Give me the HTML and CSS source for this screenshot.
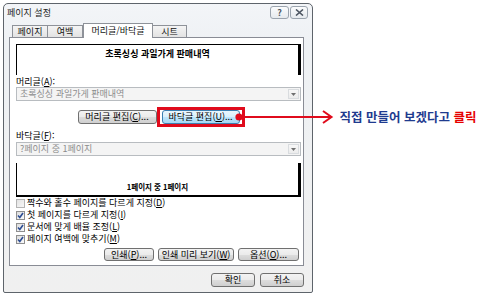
FILE: index.html
```html
<!DOCTYPE html>
<html lang="ko">
<head>
<meta charset="utf-8">
<title>페이지 설정</title>
<link rel="stylesheet" href="styles.css">
</head>
<body>
<div class="dialog">
  <div class="titlebar">
    <span class="title">페이지 설정</span>
    <div class="caption-btns">
      <span class="cbtn help">?</span>
      <span class="cbtn close"><svg width="9" height="7" viewBox="0 0 9 7"><path d="M1 0.5 L8 6.5 M8 0.5 L1 6.5" stroke="#4d5662" stroke-width="1.6" fill="none"/></svg></span>
    </div>
  </div>
  <div class="tabs">
    <span class="tab t1">페이지</span>
    <span class="tab t2">여백</span>
    <span class="tab t3 selected">머리글/바닥글</span>
    <span class="tab t4">시트</span>
  </div>
  <div class="panel">
    <div class="preview head-preview">초록싱싱 과일가게 판매내역</div>
    <div class="lbl">머리글(<u>A</u>):</div>
    <div class="combo"><span class="combo-text">초록싱싱 과일가게 판매내역</span><span class="drop"><svg width="5" height="3" viewBox="0 0 5 3"><path d="M0 0 L5 0 L2.5 3 Z" fill="#6f6f6f"/></svg></span></div>
    <div class="btnrow center">
      <span class="btn w79">머리글 편집(<u>C</u>)...</span>
      <span class="hl">
        <span class="btn hot w78">바닥글 편집(<u>U</u>)...</span>
        <span class="callout">
          <svg class="connector" width="100" height="16" viewBox="0 0 100 16">
            <line x1="4" y1="8" x2="96" y2="8" stroke="#e00b1c" stroke-width="2"/>
            <circle cx="4" cy="8" r="3.6" fill="#e00b1c"/>
            <polyline points="88,2 96.5,8 88,14" fill="none" stroke="#e00b1c" stroke-width="2"/>
          </svg>
          <span class="note">직접 만들어 보겠다고 <span class="red">클릭</span></span>
        </span>
      </span>
    </div>
    <div class="lbl lbl2">바닥글(<u>F</u>):</div>
    <div class="combo"><span class="combo-text">?페이지 중 1페이지</span><span class="drop"><svg width="5" height="3" viewBox="0 0 5 3"><path d="M0 0 L5 0 L2.5 3 Z" fill="#6f6f6f"/></svg></span></div>
    <div class="preview foot-preview">1페이지 중 1페이지</div>
    <div class="checks">
      <div class="chk"><span class="cb off"></span>짝수와 홀수 페이지를 다르게 지정(<u>D</u>)</div>
      <div class="chk"><span class="cb on"><svg width="7" height="7" viewBox="0 0 7 7"><path d="M1 3.5 L2.8 5.5 L6 1" stroke="#2b4c93" stroke-width="1.6" fill="none"/></svg></span>첫 페이지를 다르게 지정(<u>I</u>)</div>
      <div class="chk"><span class="cb on"><svg width="7" height="7" viewBox="0 0 7 7"><path d="M1 3.5 L2.8 5.5 L6 1" stroke="#2b4c93" stroke-width="1.6" fill="none"/></svg></span>문서에 맞게 배율 조정(<u>L</u>)</div>
      <div class="chk"><span class="cb on"><svg width="7" height="7" viewBox="0 0 7 7"><path d="M1 3.5 L2.8 5.5 L6 1" stroke="#2b4c93" stroke-width="1.6" fill="none"/></svg></span>페이지 여백에 맞추기(<u>M</u>)</div>
    </div>
    <div class="btnrow right">
      <span class="btn w50">인쇄(<u>P</u>)...</span>
      <span class="btn w76">인쇄 미리 보기(<u>W</u>)</span>
      <span class="btn w61">옵션(<u>O</u>)...</span>
    </div>
  </div>
  <div class="okrow">
    <span class="btn w44">확인</span>
    <span class="btn w44">취소</span>
  </div>
</div>
</body>
</html>
```
FILE: styles.css
```css
* { box-sizing: border-box; }
html, body { margin: 0; padding: 0; background: #fff; }
body {
  width: 482px;
  height: 299px;
  overflow: hidden;
  font-family: "Noto Sans CJK KR", "Noto Sans", sans-serif;
  font-size: 9px;
  color: #000;
}
u { text-decoration: underline; text-underline-offset: 1px; }

.dialog {
  margin: 3px 0 0 3px;
  width: 310px;
  height: 290px;
  border: 1px solid #5e646b;
  border-radius: 5px 5px 2px 2px;
  background: linear-gradient(#f3f5f8 0, #eef1f4 40px, #f0f0f0 100%);
  display: flex;
  flex-direction: column;
}

.titlebar {
  height: 19px;
  display: flex;
  justify-content: space-between;
  align-items: flex-start;
  padding: 0 4px 0 3px;
}
.title { line-height: 12px; margin-top: 3px; color: #222; }
.caption-btns { display: flex; gap: 1px; margin-top: 2px; }
.cbtn {
  height: 13px;
  border: 1px solid #9ba4ae;
  border-radius: 3px;
  background: linear-gradient(#fbfcfd, #e6eaee);
  display: flex;
  align-items: center;
  justify-content: center;
  color: #4d5662;
  font-weight: bold;
  font-size: 9px;
  line-height: 11px;
}
.help { width: 19px; }
.close { width: 18px; }

.tabs {
  height: 14px;
  display: flex;
  align-items: flex-end;
  padding-left: 8px;
}
.tab {
  height: 12px;
  border: 1px solid #8e9299;
  border-bottom: none;
  background: linear-gradient(#f4f4f4, #e3e3e3);
  text-align: center;
  line-height: 11px;
  color: #111;
}
.t1 { width: 36px; }
.t2 { width: 35px; border-left: none; }
.t3 { width: 70px; }
.t4 { width: 34px; border-left: none; }
.tab.selected {
  height: 15px;
  background: #fff;
  margin-bottom: -1px;
  position: relative;
  z-index: 1;
  line-height: 13px;
}

.panel {
  margin: 0 8px 0 5px;
  height: 229px;
  border: 1px solid #898c95;
  background: #fff;
  padding: 6px 2px 4px 6px;
  display: flex;
  flex-direction: column;
}

.preview {
  border-left: 1px solid #000;
  border-right: 3px solid #000;
  text-align: center;
  font-weight: bold;
  background: #fff;
}
.head-preview {
  height: 31px;
  border-top: 1px solid #000;
  padding-top: 3px;
  line-height: 11px;
}
.foot-preview {
  height: 34px;
  margin-top: 7px;
  border-bottom: 2px solid #000;
  display: flex;
  align-items: flex-end;
  justify-content: center;
  padding-bottom: 3px;
  line-height: 10px;
  font-size: 7.5px;
}

.lbl { line-height: 11px; height: 11px; margin-top: 1px; }
.lbl2 { margin-top: 6px; }

.combo {
  height: 14px;
  border: 1px solid #b8bcc0;
  background: #f4f4f4;
  display: flex;
  justify-content: space-between;
  align-items: center;
  padding-left: 3px;
  color: #8c8c8c;
  line-height: 12px;
}
.lbl2 + .combo { margin-top: 1px; }
.drop {
  width: 11px;
  height: 10px;
  margin-right: 1px;
  border: 1px solid #d9dcdf;
  background: linear-gradient(#f7f7f7, #ececec);
  display: flex;
  align-items: center;
  justify-content: center;
}

.btnrow { display: flex; }
.btnrow.center { justify-content: center; gap: 5px; margin-top: 9px; }
.btnrow.right { justify-content: flex-end; gap: 4px; margin-top: 3px; padding-right: 2px; }

.btn {
  height: 14px;
  border: 1px solid #707070;
  border-radius: 3px;
  background: linear-gradient(#f3f3f3 0%, #ebebeb 50%, #dddddd 51%, #cfcfcf 100%);
  display: flex;
  align-items: center;
  justify-content: center;
  line-height: 12px;
  white-space: nowrap;
}
.btnrow.right .btn { height: 13px; }
.btn.hot {
  border-color: #3c7fb1;
  background: linear-gradient(#eaf6fd 0%, #d9f0fc 50%, #bee6fd 51%, #a7d9f5 100%);
}
.w79 { width: 79px; }
.w78 { width: 78px; }
.w50 { width: 50px; }
.w76 { width: 76px; }
.w61 { width: 61px; }
.w44 { width: 44px; }

.hl { position: relative; display: flex; }
.hl::before {
  content: "";
  position: absolute;
  left: -5px;
  right: -5px;
  top: -3px;
  bottom: -3px;
  border: 3px solid #e00b1c;
}
.callout {
  position: absolute;
  left: calc(100% - 5px);
  top: 50%;
  transform: translateY(-50%);
  display: flex;
  align-items: center;
  white-space: nowrap;
  z-index: 2;
}
.connector { display: block; }
.note {
  margin-left: 5px;
  font-size: 12.5px;
  font-weight: bold;
  color: #1f3b8f;
  line-height: 16px;
}
.red { color: #e60000; }

.checks { display: flex; flex-direction: column; }
.chk {
  height: 12px;
  display: flex;
  align-items: center;
  line-height: 12px;
  white-space: nowrap;
}
.cb {
  width: 9px;
  height: 9px;
  margin-right: 2px;
  border: 1px solid #8f8f8f;
  background: linear-gradient(135deg, #dcdcdc, #fbfbfb);
  display: flex;
  align-items: center;
  justify-content: center;
}
.cb.off { border-color: #b4b4b4; background: linear-gradient(135deg, #e2e2e2, #f7f7f7); }

.okrow {
  display: flex;
  justify-content: flex-end;
  gap: 5px;
  margin-top: 7px;
  padding-right: 8px;
}
```
